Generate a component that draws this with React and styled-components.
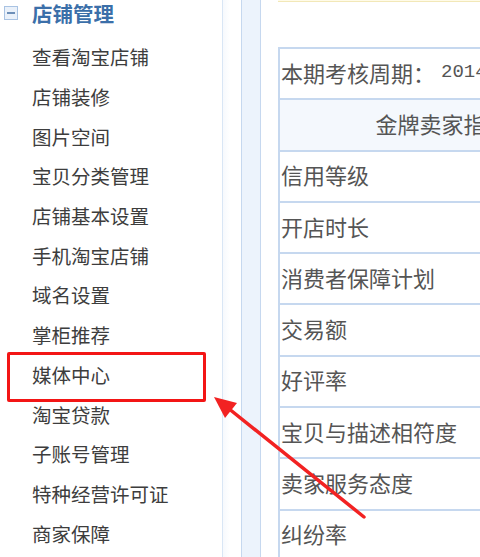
import React from "react";
import styled, { createGlobalStyle } from "styled-components";

const GlobalStyle = createGlobalStyle`
  html, body {
    margin: 0;
    padding: 0;
    background: #fff;
    overflow: hidden;
  }
  body {
    font-family: "Noto Sans CJK SC", "Noto Sans", sans-serif;
  }
`;

const Page = styled.div`
  position: relative;
  display: flex;
  width: 480px;
  height: 557px;
  overflow: hidden;
  background: #fff;
`;

const Sidebar = styled.div`
  width: 222px;
  flex-shrink: 0;
`;

const GroupHeader = styled.div`
  display: flex;
  align-items: center;
  height: 25px;
  margin-bottom: 12px;
`;

const Toggle = styled.span`
  display: flex;
  align-items: center;
  justify-content: center;
  box-sizing: border-box;
  width: 14px;
  height: 14px;
  margin-left: 4px;
  margin-right: 14px;
  border: 1px solid #a9c3e3;
  background: #eaf1fa;
  &::before {
    content: "";
    width: 8px;
    height: 2px;
    background: #6d8fb8;
  }
`;

const GroupTitle = styled.span`
  font-size: 20.5px;
  font-weight: 700;
  color: #3b6fa9;
`;

const MenuList = styled.ul`
  list-style: none;
  margin: 0;
  padding: 0;
`;

const MenuItem = styled.li`
  position: relative;
  display: flex;
  align-items: center;
  height: 39.7px;
  padding-left: 32px;
  font-size: 19.5px;
  color: #3d3d3d;
  white-space: nowrap;

  ${(props) =>
    props.$marked &&
    `
    &::after {
      content: "";
      position: absolute;
      left: 7px;
      width: 193px;
      top: -3px;
      height: 44px;
      border: 3px solid #f31515;
      border-radius: 2px;
    }
  `}
`;

const Gutter = styled.div`
  width: 18px;
  flex-shrink: 0;
  border-left: 1px solid #d9e6f5;
  background: linear-gradient(to right, #f6f9fd, #fff 40%);
`;

const Rail = styled.div`
  width: 18px;
  flex-shrink: 0;
  border-left: 1.5px solid #c6d8ef;
  border-right: 1.5px solid #c6d8ef;
  background: #ecf3fc;
`;

const Content = styled.div`
  flex: 1;
  min-width: 0;
  padding-left: 17px;
`;

const Notice = styled.div`
  height: 1px;
  background: #fffbe8;
  border-bottom: 1px solid #f2e8b8;
  margin-bottom: 45px;
`;

const Table = styled.div`
  width: 322px;
  border-left: 2px solid #c6d8ef;
`;

const Row = styled.div`
  box-sizing: border-box;
  height: 51.3px;
  display: flex;
  align-items: center;
  border-top: 2px solid #c6d8ef;
  padding-left: 1px;
  padding-bottom: 4px;
  font-size: 22px;
  color: #555;
  white-space: nowrap;
  background: ${(p) => (p.$head ? "#f4f8fd" : "#fff")};
  justify-content: ${(p) => (p.$head ? "center" : "flex-start")};
`;

const Year = styled.span`
  font-family: "Liberation Mono", monospace;
  font-size: 19px;
  margin-left: 6px;
`;

const Arrow = styled.svg`
  position: absolute;
  left: 0;
  top: 0;
  pointer-events: none;
`;

const menu = [
  "查看淘宝店铺",
  "店铺装修",
  "图片空间",
  "宝贝分类管理",
  "店铺基本设置",
  "手机淘宝店铺",
  "域名设置",
  "掌柜推荐",
  "媒体中心",
  "淘宝贷款",
  "子账号管理",
  "特种经营许可证",
  "商家保障",
];

const metrics = [
  "信用等级",
  "开店时长",
  "消费者保障计划",
  "交易额",
  "好评率",
  "宝贝与描述相符度",
  "卖家服务态度",
  "纠纷率",
];

export default function App() {
  return (
    <>
      <GlobalStyle />
      <Page>
        <Sidebar>
          <GroupHeader>
            <Toggle />
            <GroupTitle>店铺管理</GroupTitle>
          </GroupHeader>
          <MenuList>
            {menu.map((name) => (
              <MenuItem key={name} $marked={name === "媒体中心"}>
                {name}
              </MenuItem>
            ))}
          </MenuList>
        </Sidebar>
        <Gutter />
        <Rail />
        <Content>
          <Notice />
          <Table>
            <Row>
              本期考核周期：<Year>2014</Year>
            </Row>
            <Row $head>金牌卖家指标</Row>
            {metrics.map((m) => (
              <Row key={m}>{m}</Row>
            ))}
          </Table>
        </Content>
        <Arrow width="480" height="557" viewBox="0 0 480 557">
          <line
            x1="364"
            y1="517"
            x2="228"
            y2="408"
            stroke="#f22222"
            strokeWidth="3.5"
            strokeLinecap="round"
          />
          <polygon points="214,397 237,403 225,418" fill="#f22222" />
        </Arrow>
      </Page>
    </>
  );
}
